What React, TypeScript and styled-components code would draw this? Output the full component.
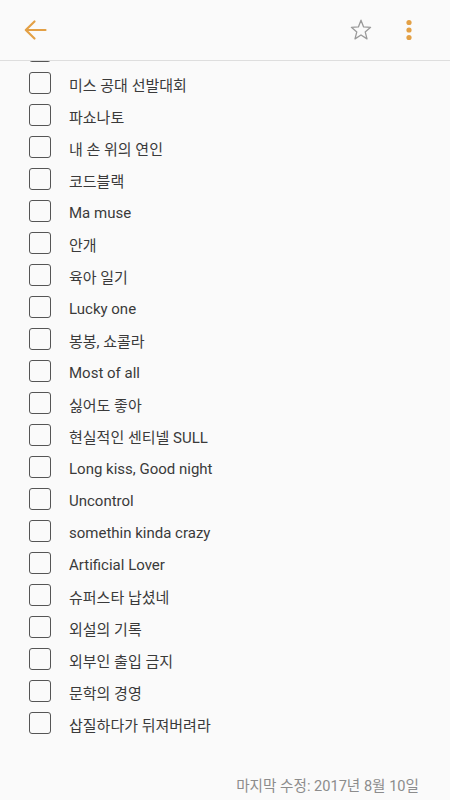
import React from "react";
import styled, { createGlobalStyle } from "styled-components";

const Global = createGlobalStyle`
  html, body { margin: 0; padding: 0; background: #fafafa; }
  body { font-family: "Roboto", "Noto Sans CJK KR", "Noto Sans", sans-serif; }
`;

const Page = styled.div`
  width: 450px;
  height: 800px;
  display: flex;
  flex-direction: column;
  background: #fafafa;
  overflow: hidden;
`;

const Header = styled.header`
  height: 60px;
  flex: none;
  display: flex;
  align-items: center;
  border-bottom: 1px solid #dedede;
  padding: 0 0 0 22px;
  position: relative;
  z-index: 1;
  background: #fafafa;
`;

const IconButton = styled.button<{ w: number }>`
  border: none;
  background: none;
  padding: 0;
  width: ${(p) => p.w}px;
  height: 40px;
  display: flex;
  align-items: center;
  justify-content: center;
`;

const Spacer = styled.div<{ w?: number }>`
  flex: ${(p) => (p.w ? "none" : "1")};
  width: ${(p) => (p.w ? `${p.w}px` : "auto")};
`;

const ListViewport = styled.div`
  overflow: hidden;
  flex: none;
`;

const List = styled.ul`
  list-style: none;
  margin: -24px 0 0 0;
  padding: 0;
`;

const Row = styled.li`
  height: 32px;
  display: flex;
  align-items: center;
  padding-left: 29px;
`;

const Box = styled.span`
  width: 22px;
  height: 22px;
  box-sizing: border-box;
  border: 1.6px solid #555;
  border-radius: 3px;
  flex: none;
  margin-top: -4px;
`;

const Label = styled.span`
  margin-left: 18px;
  font-size: 15px;
  color: #3a3a3a;
  margin-top: -1px;
`;

const Footer = styled.footer`
  padding: 35px 31px 0 0;
  text-align: right;
  font-size: 14.6px;
  line-height: 20px;
  color: #8c8c8c;
`;

const items = [
  "",
  "미스 공대 선발대회",
  "파쇼나토",
  "내 손 위의 연인",
  "코드블랙",
  "Ma muse",
  "안개",
  "육아 일기",
  "Lucky one",
  "봉봉, 쇼콜라",
  "Most of all",
  "싫어도 좋아",
  "현실적인 센티넬 SULL",
  "Long kiss, Good night",
  "Uncontrol",
  "somethin kinda crazy",
  "Artificial Lover",
  "슈퍼스타 납셨네",
  "외설의 기록",
  "외부인 출입 금지",
  "문학의 경영",
  "삽질하다가 뒤져버려라",
];

export default function App() {
  return (
    <Page>
      <Global />
      <Header>
        <IconButton w={26} aria-label="back">
          <svg width="24" height="22" viewBox="0 0 24 22">
            <path d="M22.5 11 H3 M11.5 2.5 L2.8 11 L11.5 19.5" fill="none" stroke="#e3a045" strokeWidth="2.2" strokeLinecap="round" strokeLinejoin="round" />
          </svg>
        </IconButton>
        <Spacer />
        <IconButton w={24} aria-label="favorite">
          <svg width="24" height="24" viewBox="0 0 24 24">
            <path d="M12 2.2 L14.6 8.9 L21.6 9.3 L16.2 13.9 L18 20.9 L12 17 L6 20.9 L7.8 13.9 L2.4 9.3 L9.4 8.9 Z" fill="none" stroke="#9a9a9a" strokeWidth="1.3" strokeLinejoin="round" />
          </svg>
        </IconButton>
        <Spacer w={24} />
        <IconButton w={24} aria-label="more">
          <svg width="8" height="24" viewBox="0 0 8 24">
            <circle cx="4" cy="4.5" r="2.6" fill="#e3a045" />
            <circle cx="4" cy="12" r="2.6" fill="#e3a045" />
            <circle cx="4" cy="19.5" r="2.6" fill="#e3a045" />
          </svg>
        </IconButton>
        <Spacer w={29} />
      </Header>
      <ListViewport>
        <List>
          {items.map((t, i) => (
            <Row key={i}>
              <Box />
              <Label>{t}</Label>
            </Row>
          ))}
        </List>
      </ListViewport>
      <Footer>마지막 수정: 2017년 8월 10일</Footer>
    </Page>
  );
}
